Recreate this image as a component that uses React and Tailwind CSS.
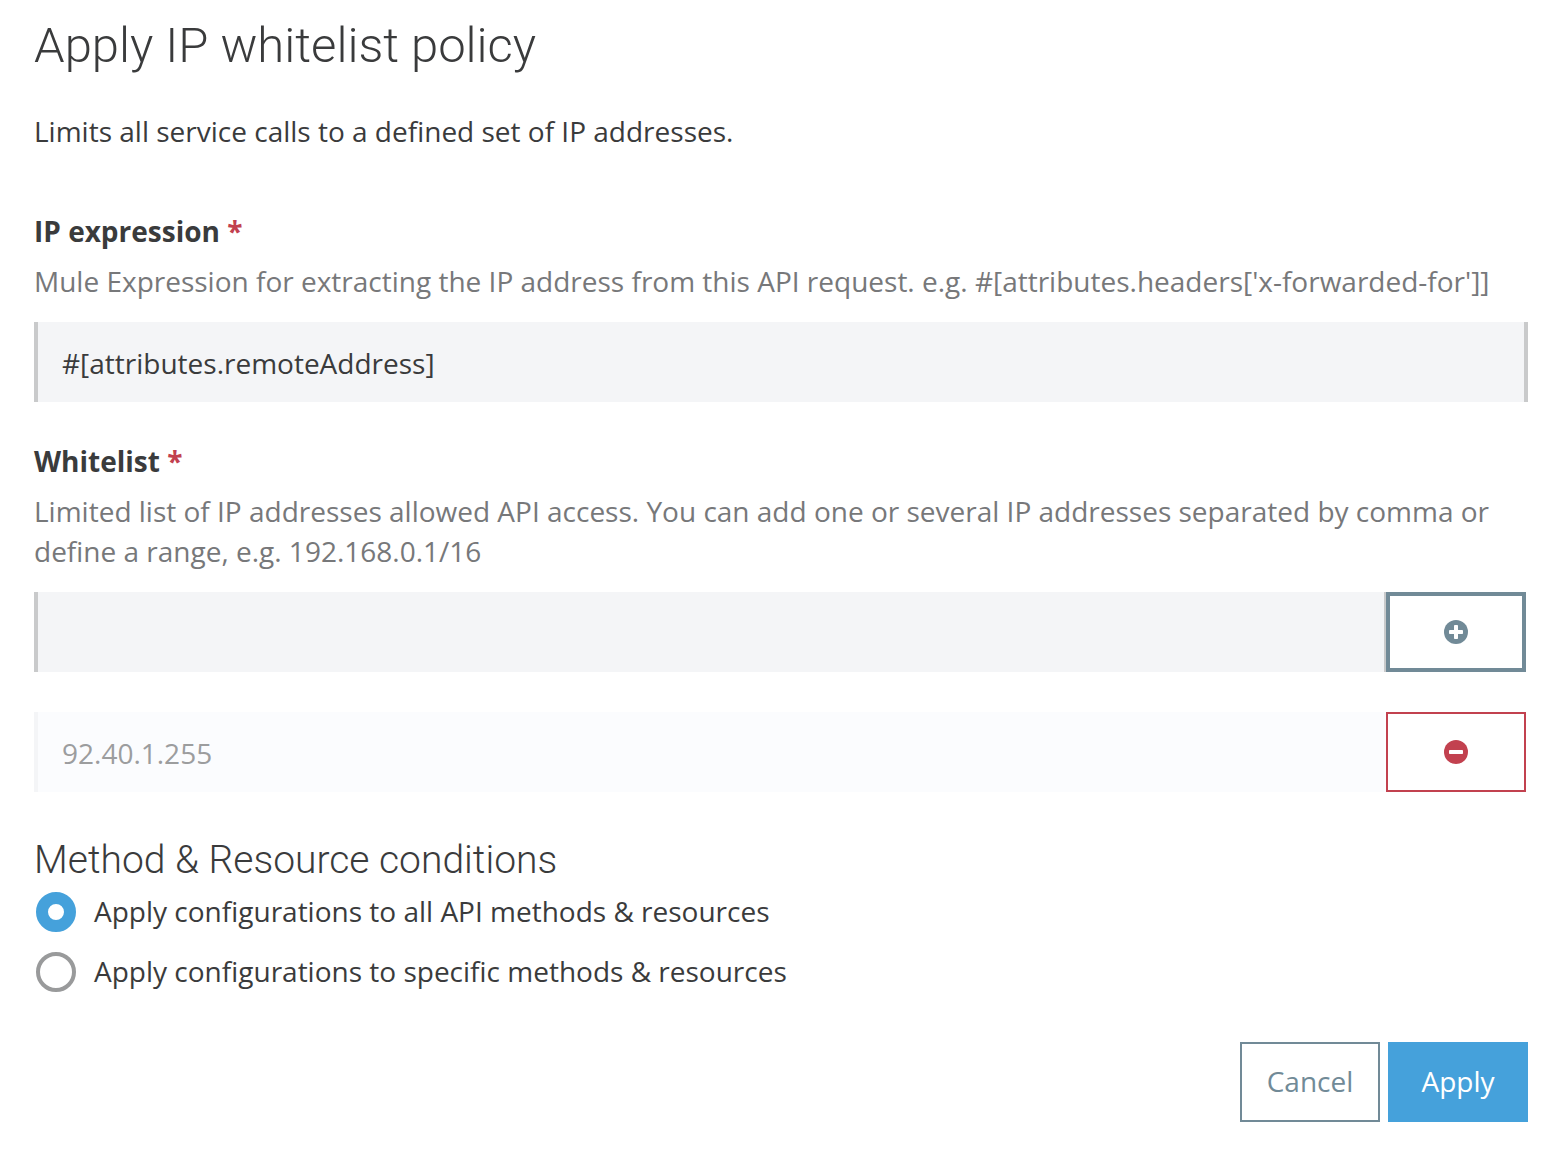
import React, { useState } from "react";

const fieldBase =
  "block h-20 w-full min-w-0 border-x-4 border-[#c9cacb] bg-[#f4f5f7] px-6 pt-[2px] text-[28px] text-[#3a3b3c] outline-none disabled:border-l-[#f4f5f7] disabled:border-r-[#fdfeff] disabled:bg-[#fbfcfe] disabled:text-[#9c9d9e]";

const rowButton = "relative -ml-[2px] flex h-20 w-[140px] shrink-0 items-center justify-center bg-white";

function FieldLabel({ htmlFor, children }) {
  return (
    <label htmlFor={htmlFor} className="block font-bold leading-10 text-[#3a3b3c]">
      {children} <span className="text-[#c2414f]">*</span>
    </label>
  );
}

function PlusIcon() {
  return (
    <svg width="24" height="24" viewBox="0 0 24 24" aria-hidden="true">
      <circle cx="12" cy="12" r="12" fill="#718a97" />
      <rect x="10" y="5" width="4" height="14" rx="0.8" fill="#fff" />
      <rect x="5" y="10" width="14" height="4" rx="0.8" fill="#fff" />
    </svg>
  );
}

function MinusIcon() {
  return (
    <svg width="24" height="24" viewBox="0 0 24 24" aria-hidden="true">
      <circle cx="12" cy="12" r="12" fill="#c2414f" />
      <rect x="5" y="10" width="14" height="4" rx="0.8" fill="#fff" />
    </svg>
  );
}

function Radio({ label, checked, onChange }) {
  return (
    <label className="flex items-center gap-[18px]">
      <input
        type="radio"
        name="conditions"
        checked={checked}
        onChange={onChange}
        className="size-10 shrink-0 appearance-none rounded-full border-4 border-[#999a9b] bg-white checked:border-[12px] checked:border-[#45a1db]"
      />
      <span className="pb-[2px] leading-[38px]">{label}</span>
    </label>
  );
}

export default function App() {
  const [scope, setScope] = useState("all");
  return (
    <main className="bg-white pt-4 pr-10 pb-8 pl-[34px] font-['Open_Sans',sans-serif] text-[28px] text-[#3a3b3c]">
      <h1 className="font-[Roboto,sans-serif] text-[49px] font-light leading-[59px]">Apply IP whitelist policy</h1>
      <p className="mt-9 leading-10">Limits all service calls to a defined set of IP addresses.</p>

      <form className="mt-[60px]" onSubmit={(e) => e.preventDefault()}>
        <FieldLabel htmlFor="expression">IP expression</FieldLabel>
        <p className="mt-[10px] leading-10 text-[#77787a]">
          Mule Expression for extracting the IP address from this API request. e.g. #[attributes.headers['x-forwarded-for']]
        </p>
        <input id="expression" className={`mt-[21px] ${fieldBase}`} defaultValue="#[attributes.remoteAddress]" />

        <div className="mt-[39px]">
          <FieldLabel htmlFor="whitelist">Whitelist</FieldLabel>
          <p className="mt-[10px] leading-10 text-[#77787a]">
            Limited list of IP addresses allowed API access. You can add one or several IP addresses separated by comma or
            define a range, e.g. 192.168.0.1/16
          </p>
        </div>
        <div className="mt-[21px] mr-[2px] flex">
          <input id="whitelist" className={`flex-1 ${fieldBase}`} />
          <button type="button" aria-label="Add" className={`border-4 border-[#718a97] ${rowButton}`}>
            <PlusIcon />
          </button>
        </div>
        <div className="mt-10 mr-[2px] flex">
          <input aria-label="Whitelisted address" disabled className={`flex-1 ${fieldBase}`} defaultValue="92.40.1.255" />
          <button type="button" aria-label="Remove" className={`border-2 border-[#c2414f] ${rowButton}`}>
            <MinusIcon />
          </button>
        </div>

        <fieldset className="mt-10">
          <legend className="pb-1 font-[Roboto,sans-serif] text-[39px] font-light leading-[56px]">
            Method &amp; Resource conditions
          </legend>
          <div className="flex flex-col gap-5 pl-[2px]">
            <Radio label="Apply configurations to all API methods & resources" checked={scope === "all"} onChange={() => setScope("all")} />
            <Radio label="Apply configurations to specific methods & resources" checked={scope === "specific"} onChange={() => setScope("specific")} />
          </div>
        </fieldset>

        <div className="mt-[50px] flex justify-end gap-2">
          <button type="button" className="h-20 w-[140px] border-2 border-[#718a97] bg-white pb-[2px] text-[#718a97]">Cancel</button>
          <button type="submit" className="h-20 w-[140px] bg-[#45a1db] pb-[2px] text-white">Apply</button>
        </div>
      </form>
    </main>
  );
}
